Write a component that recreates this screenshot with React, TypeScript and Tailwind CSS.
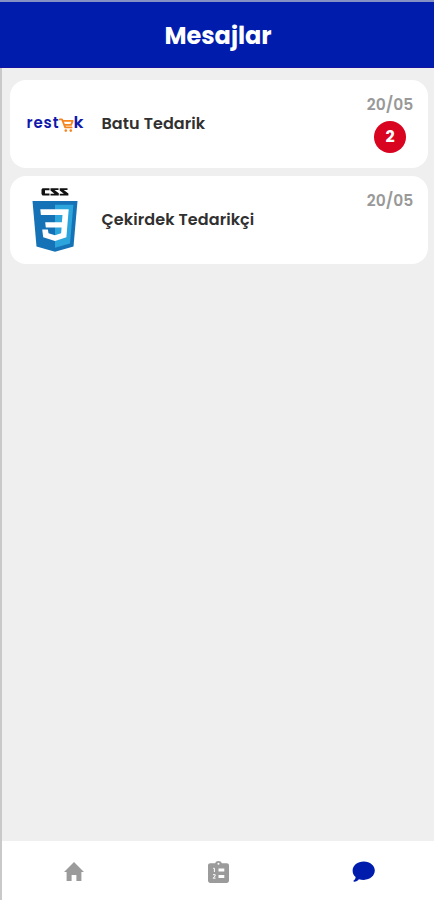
import React from 'react';

interface Conversation {
  id: number;
  name: string;
  date: string;
  unread: number;
  logo: React.ReactNode;
}

const RestokLogo: React.FC = () => (
  <svg width="58" height="22" viewBox="0 0 58 22" className="block">
    <g fill="#1019ac" fontFamily="Poppins, Lato, sans-serif" fontWeight="600" fontSize="15">
      <text x="0.5" y="15.2" textLength="32" lengthAdjust="spacing">rest</text>
      <text x="47.5" y="15.2" textLength="10" lengthAdjust="spacingAndGlyphs">k</text>
    </g>
    <g fill="none" stroke="#f5851f" strokeWidth="1.8" strokeLinejoin="round" strokeLinecap="round">
      <path d="M33.8 6.4h2.2l3.200 8h6.400" />
      <path d="M37 7.800h9.700l-1.600 4h-6.400" />
    </g>
    <circle cx="39.800" cy="17.600" r="1.300" fill="#f5851f" />
    <circle cx="44.800" cy="17.600" r="1.300" fill="#f5851f" />
  </svg>
);

const CssLogo: React.FC = () => (
  <svg width="46" height="66" viewBox="0 0 46 66" className="block">
    <g fill="#111">
      <path d="M10.500 1.200h7v2H13v3.200h4.500v2h-7L9.500 7V2.400z" />
      <path d="M18.500 1.200h8v1.700h-4l4.300 3.300v2.200h-8.300V6.700h4l-4-3.300z" />
      <path d="M27.700 1.200h7.800v1.700h-3.800l4.700 3.600v1.900h-8.700V6.700h4.200l-4.200-3.300z" />
    </g>
    <path d="M.5 14h45l-4 45.500L23 64.700 4.500 59.500z" fill="#1572b6" />
    <path d="M23 17.700h18.400L38 56.500l-15 4.300z" fill="#2ba5dc" />
    <path
      d="M8.300 22.300h28.400l-2.300 27.900L23 54l-11.800-3.800-1-7.700h5.700l.6 3.700 6.500 2 6.100-2 .5-5.700H13.800l-.6-5.300h16.700l.6-7.200H8.900z"
      fill="#fff"
    />
  </svg>
);

const HomeIcon: React.FC = () => (
  <svg width="20" height="19" viewBox="0 0 20 19" className="block" fill="#9b9b9b">
    <path d="M10 0 0 10h2.600v9h5v-6h4.800v6h5v-9H20z" />
  </svg>
);

const OrdersIcon: React.FC = () => (
  <svg width="21" height="22" viewBox="0 0 21 22" className="block">
    <path
      d="M2.200 2.200h5C7.600.9 8.900 0 10.500 0s2.900.9 3.300 2.200h5c1.200 0 2.200.9 2.200 2.100v15.500c0 1.200-1 2.200-2.200 2.200H2.200C1 22 0 21 0 19.800V4.300c0-1.200 1-2.100 2.200-2.100z"
      fill="#9b9b9b"
    />
    <circle cx="10.500" cy="2.800" r="1" fill="#fff" />
    <path d="M10.500 7.500h5.800v3h-5.800zM10.500 13.900h5.800v3h-5.800z" fill="#fff" />
    <path d="M5.200 7.300h1.200v3.700M5 13.700h2.200v1.200L5.200 17.200h2.300" fill="none" stroke="#fff" />
  </svg>
);

const ChatIcon: React.FC = () => (
  <svg width="23" height="21" viewBox="0 0 23 21" className="block" fill="#001cac">
    <path d="M11.800.5C5.600.5.600 4.400.600 9.600c0 2.700 1.100 5 3 6.500 0 1.500-.6 2.500-1.900 3.500-.5.500-.2 1.200.5 1.100 2.200-.3 3.600-1.200 4.700-2.500 1.500.5 3.200.7 4.900.7 6.200 0 11-4.200 11-9.300S18 .5 11.800.5z" />
  </svg>
);

const conversations: Conversation[] = [
  { id: 1, name: 'Batu Tedarik', date: '20/05', unread: 2, logo: <RestokLogo /> },
  { id: 2, name: 'Çekirdek Tedarikçi', date: '20/05', unread: 0, logo: <CssLogo /> },
];

const ConversationCard: React.FC<{ item: Conversation }> = ({ item }) => (
  <li className="flex h-[88px] items-center rounded-[16px] bg-white px-[15px]">
    <div className="flex w-[60px] justify-center">{item.logo}</div>
    <p className="ml-[16.5px] flex-1 whitespace-nowrap text-[16px] font-semibold tracking-[0.08px] text-[#303030]">
      {item.name}
    </p>
    <div className="flex h-full w-[46px] flex-col items-center pt-[13px]">
      <span className="text-[15.5px] font-semibold leading-6 text-[#999]">{item.date}</span>
      {item.unread > 0 && (
        <span className="mt-1 flex size-8 items-center justify-center rounded-full bg-[#d80420] text-[16px] font-bold text-white">
          {item.unread}
        </span>
      )}
    </div>
  </li>
);

export default function App() {
  return (
    <div className="flex h-[900px] w-[434px] flex-col overflow-hidden bg-[#efefef] font-[Poppins,Inter,sans-serif]">
      <header className="flex h-[68px] items-center justify-center border-b border-t-2 border-b-[#1414a0] border-t-[#8590c4] bg-[#001cac] pl-0.5 pt-[3px]">
        <h1 className="text-[24px] font-bold text-white">Mesajlar</h1>
      </header>
      <div className="flex flex-1 flex-col border-l-2 border-[#c9c9c9]">
        <main className="flex-1 pl-2 pr-1.5 pt-3">
          <ul className="flex flex-col gap-2">
            {conversations.map((item) => (
              <ConversationCard key={item.id} item={item} />
            ))}
          </ul>
        </main>
        <nav className="grid h-[59px] grid-cols-3 items-center bg-white pb-0.5 pt-1">
          <button className="flex justify-center pr-px" aria-label="Ana Sayfa">
            <HomeIcon />
          </button>
          <button className="flex justify-center" aria-label="Siparişler">
            <OrdersIcon />
          </button>
          <button className="flex justify-center pl-0.5" aria-label="Mesajlar">
            <ChatIcon />
          </button>
        </nav>
      </div>
    </div>
  );
}
